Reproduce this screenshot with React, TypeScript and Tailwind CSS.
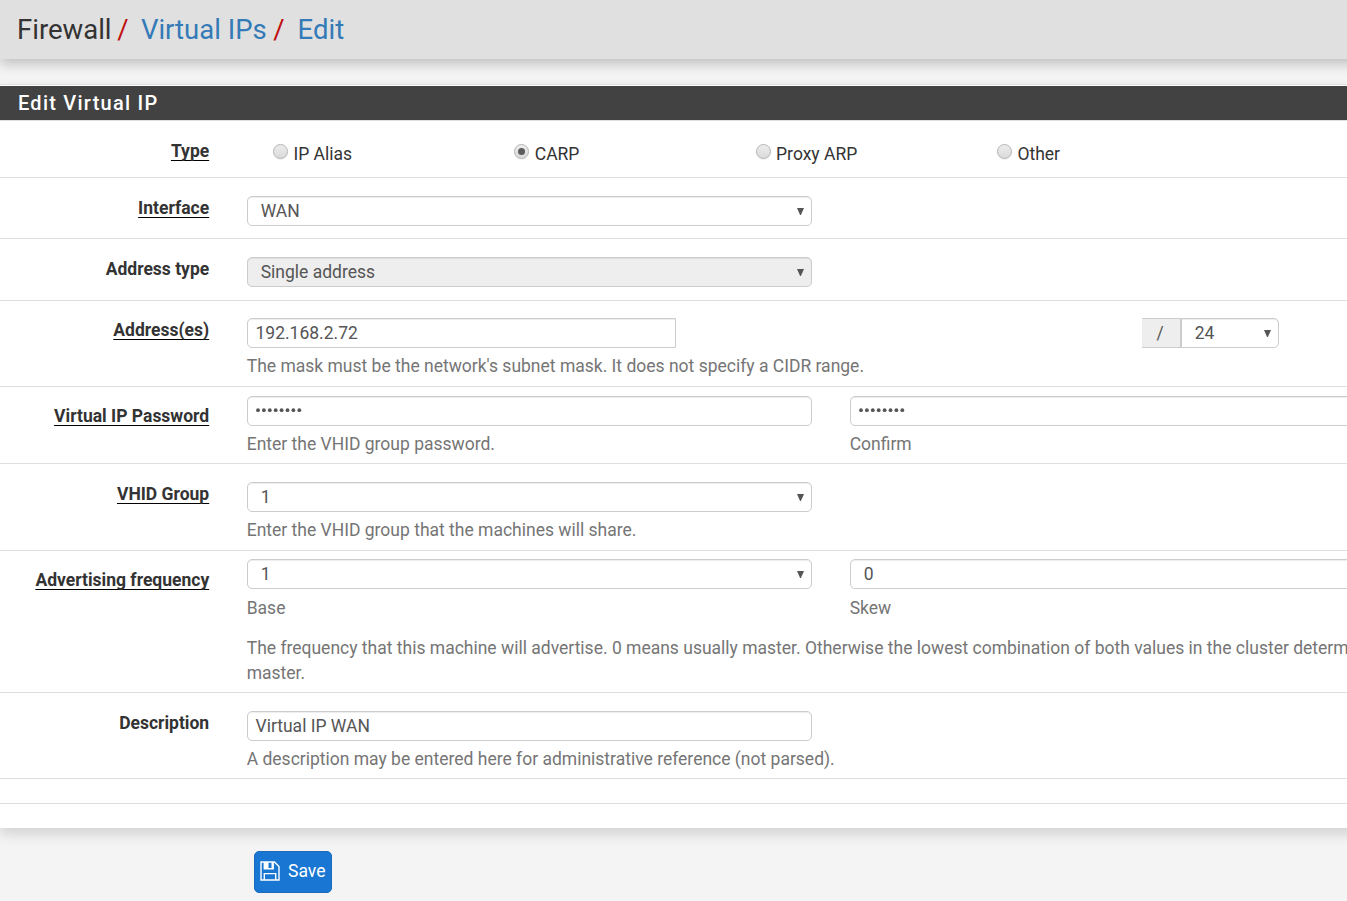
import React from "react";

function Row({ label, required, className, labelClass = "pt-[18px]", children }: {
  label?: string; required?: boolean; className: string; labelClass?: string; children?: React.ReactNode;
}) {
  return (
    <div className={`flex border-b border-[#dedede] ${className}`}>
      <div className={`w-[209.2px] shrink-0 text-right font-bold leading-[25px] text-[#333] ${labelClass}`}>
        {label && (
          <span className={required ? "underline decoration-black decoration-1 underline-offset-[3px] [text-decoration-skip-ink:none]" : ""}>{label}</span>
        )}
      </div>
      <div className="ml-[37.5px] min-w-0 flex-1 leading-[25px] text-[#757575]">{children}</div>
    </div>
  );
}

const control = "flex h-[30px] items-center border border-[#ccc] text-[#555] shadow-[inset_0_1px_1px_rgba(0,0,0,0.075)]";

function Select({ value, className = "w-[565px] rounded-[5px] bg-white" }: { value: string; className?: string }) {
  return (
    <div className={`${control} justify-between pl-[13px] pr-[7px] ${className}`}>
      <span>{value}</span>
      <svg className="h-[7px] w-[7px]" viewBox="0 0 7 7"><path d="M0 0h7L3.9 7h-.8z" fill="#555" /></svg>
    </div>
  );
}

function Input({ value, className = "w-[565px] rounded-[5px]" }: { value: string; className?: string }) {
  return <div className={`${control} bg-white pl-[7.8px] ${className}`}>{value}</div>;
}

function Password() {
  return (
    <div className={`${control} w-[565px] rounded-[5px] bg-white pl-[8.5px]`}>
      <svg className="-mt-[2px] h-[5px] w-[48px]" viewBox="0 0 48 5" fill="#555">
        {[0, 1, 2, 3, 4, 5, 6, 7].map((i) => <circle key={i} cx={2 + i * 5.9} cy="2.2" r="1.9" />)}
      </svg>
    </div>
  );
}

function Radio({ label, checked }: { label: string; checked?: boolean }) {
  return (
    <div className="flex w-[241.3px] shrink-0 text-[#333]">
      <span className="mt-[2px] flex h-[15px] w-[15px] items-center justify-center rounded-full border border-[#b4b4b4] bg-linear-to-b from-[#ededed] to-[#dadada] shadow-[0_1px_1px_rgba(0,0,0,0.06)]">
        {checked && <span className="h-[7px] w-[7px] rounded-full bg-[#5b5b5b]" />}
      </span>
      <span className="ml-[5.3px]">{label}</span>
    </div>
  );
}

export default function App() {
  return (
    <div className="h-[901px] w-[1347px] overflow-hidden bg-[#f4f4f4] font-['Roboto',sans-serif] text-[17.5px] text-[#333]">
      <header className="flex h-[59px] w-[1400px] items-center bg-[#e0e0e0] pl-[17px] text-[27.5px] leading-[30px] text-[#333] shadow-[0_5px_12px_rgba(0,0,0,0.22)]">
        <span>Firewall</span>
        <span className="ml-[5.7px] text-[#c00f0f]">/</span>
        <span className="ml-[12.3px] text-[#337ab7]">Virtual IPs</span>
        <span className="ml-[6.5px] text-[#c00f0f]">/</span>
        <span className="ml-[13px] text-[#337ab7]">Edit</span>
      </header>
      <main className="mt-[25px] h-[744px] w-[1400px] border-t border-[#dedede] bg-white pt-px shadow-[0_6px_12px_rgba(0,0,0,0.14)]">
        <h2 className="flex h-[35px] items-center border-b border-[#dedede] bg-[#424242] pl-[18px] text-[20px] font-medium tracking-[1.25px] text-white [background-clip:padding-box]">Edit Virtual IP</h2>
        <Row label="Type" required className="h-[57px]">
          <div className="flex pl-[26.5px] pt-[21px]">
            <Radio label="IP Alias" />
            <Radio label="CARP" checked />
            <Radio label="Proxy ARP" />
            <Radio label="Other" />
          </div>
        </Row>
        <Row label="Interface" required className="h-[61px]">
          <div className="pt-[18px]"><Select value="WAN" /></div>
        </Row>
        <Row label="Address type" className="h-[62px]">
          <div className="pt-[18px]"><Select value="Single address" className="w-[565px] rounded-[5px] bg-[#eee]" /></div>
        </Row>
        <Row label="Address(es)" required className="h-[86px]" labelClass="pt-[17px]">
          <div className="flex pt-[17px]">
            <Input value="192.168.2.72" className="w-[429px] rounded-l-[5px]" />
            <div className="ml-[466px] flex h-[30px] w-[39px] items-center justify-center border-y border-r border-[#ccc] bg-[#eee] pr-px text-[#555]">/</div>
            <Select value="24" className="w-[98px] rounded-r-[5px] bg-white" />
          </div>
          <p className="pt-[6px]">The mask must be the network's subnet mask. It does not specify a CIDR range.</p>
        </Row>
        <Row label="Virtual IP Password" required className="h-[77px]" labelClass="pt-[17px]">
          <div className="flex gap-[38px] pt-[9px]">
            <div className="shrink-0"><Password /><p className="pt-[6px]">Enter the VHID group password.</p></div>
            <div className="shrink-0"><Password /><p className="pt-[6px]">Confirm</p></div>
          </div>
        </Row>
        <Row label="VHID Group" required className="h-[87px]">
          <div className="pt-[18px]"><Select value="1" /><p className="pt-[6px]">Enter the VHID group that the machines will share.</p></div>
        </Row>
        <Row label="Advertising frequency" required className="h-[142px]" labelClass="pt-[17px]">
          <div className="flex gap-[38px] pt-[8px]">
            <div className="shrink-0"><Select value="1" /><p className="pt-[7px]">Base</p></div>
            <div className="shrink-0"><Select value="0" /><p className="pt-[7px]">Skew</p></div>
          </div>
          <p className="whitespace-nowrap pt-[15px]">The frequency that this machine will advertise. 0 means usually master. Otherwise the lowest combination of both values in the cluster determines the<br />master.</p>
        </Row>
        <Row label="Description" className="h-[86px]">
          <div className="pt-[18px]"><Input value="Virtual IP WAN" /><p className="pt-[6px]">A description may be entered here for administrative reference (not parsed).</p></div>
        </Row>
        <div className="h-[25px] border-b border-[#dedede]" />
      </main>
      <button className="ml-[254px] mt-[23px] flex h-[42px] w-[78px] items-center rounded-[5px] border border-[#1c6bbb] bg-[#1976d2] pl-[5px] text-white">
        <svg className="-mt-[2px] h-[20px] w-[20px]" viewBox="0 0 20 20" fill="none" stroke="white" strokeWidth="1.4">
          <path d="M1 1h13.5L19 5.5V19H1z" />
          <path d="M4.3 1v6.7h8.9V1M4.3 19v-6.4h11.4V19" />
          <path d="M4.3 1h4.2v7H4.3zM11.5 1.5h2V8h-2z" fill="white" stroke="none" />
        </svg>
        <span className="ml-[8px] -mt-px">Save</span>
      </button>
    </div>
  );
}
